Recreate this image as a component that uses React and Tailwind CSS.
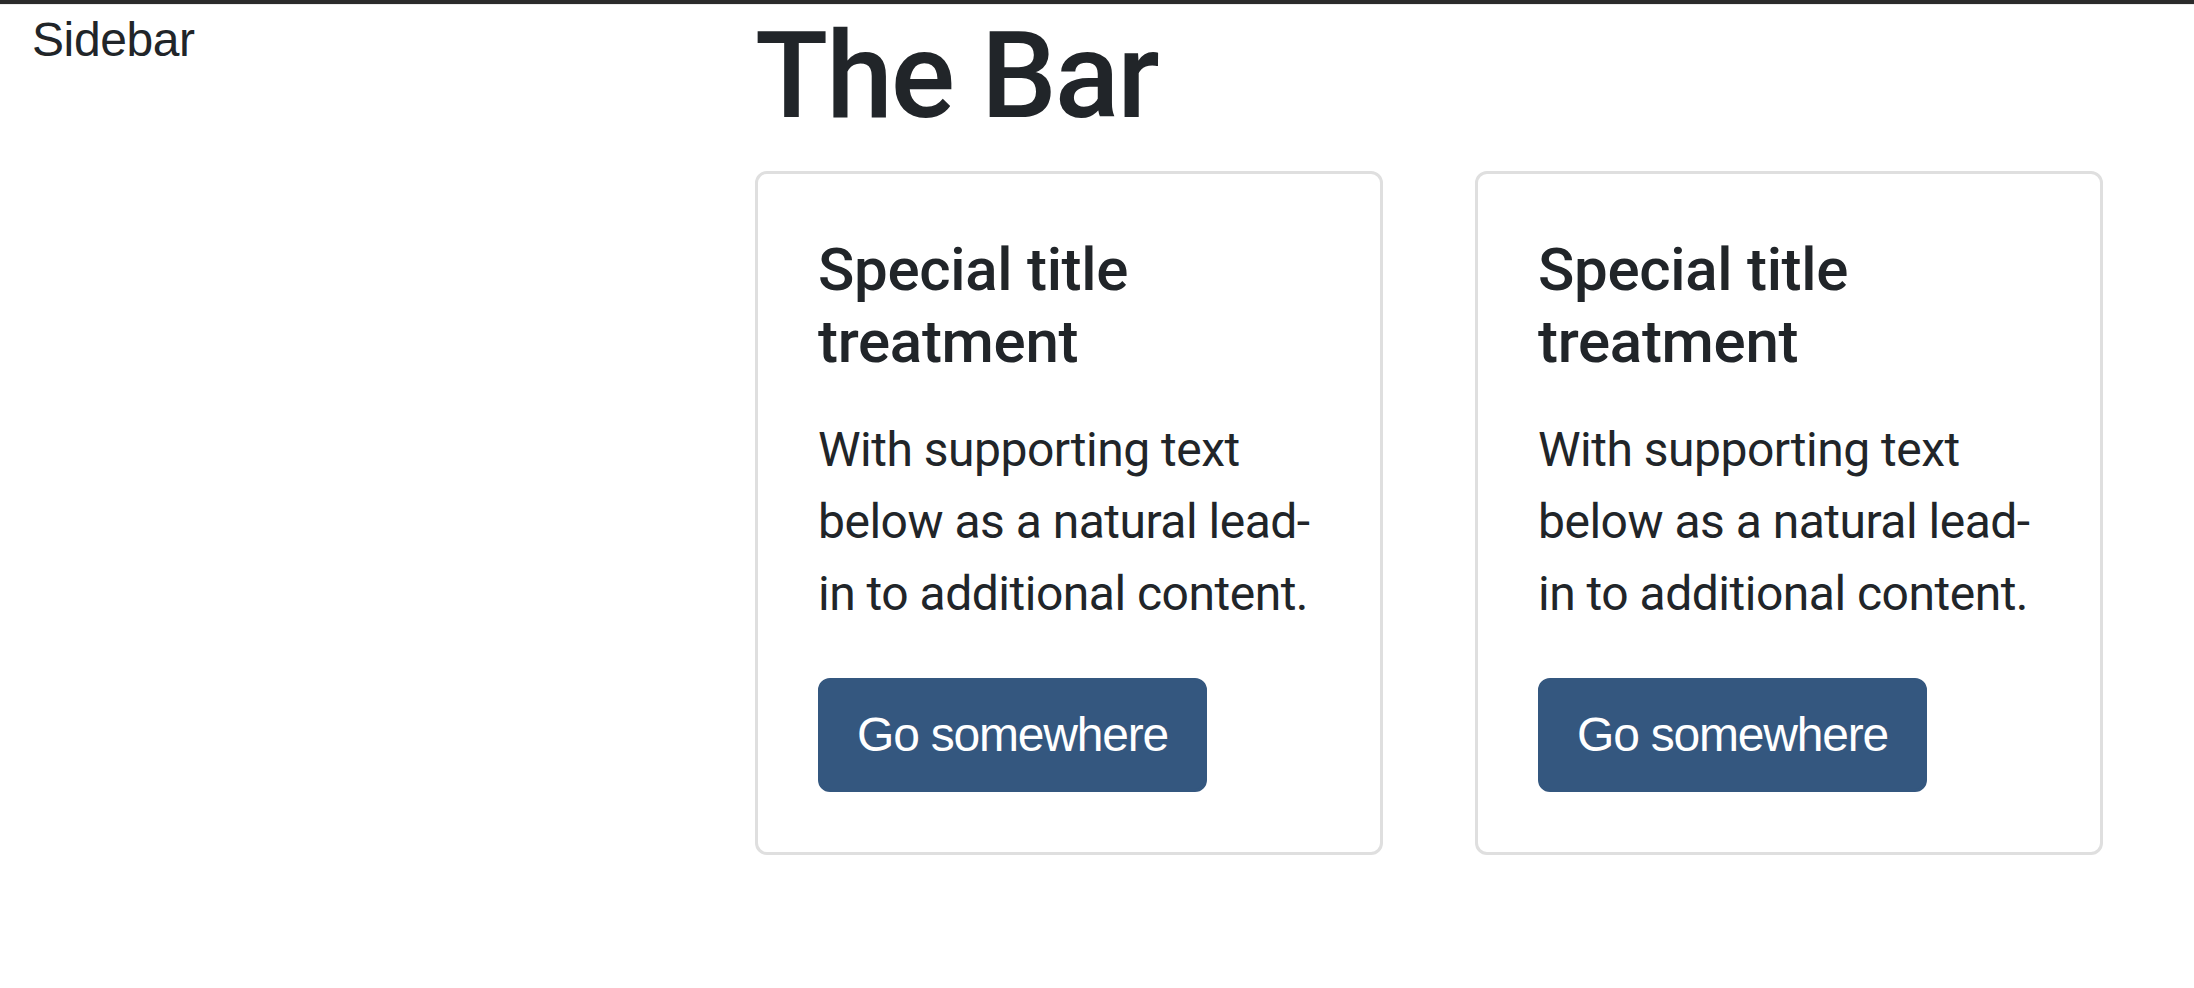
import React from "react";

const cards = [
  { id: 1, title: "Special title treatment" },
  { id: 2, title: "Special title treatment" },
];

const Card = ({ title }) => {
  return (
    <div className="w-[628px] shrink-0 rounded-[12px] border-[3px] border-[#dfdfdf] bg-white p-[60px]">
      <h5 className="mb-[36px] font-['Roboto',sans-serif] text-[60px] font-medium leading-[72px] tracking-[-0.3px] text-[#212529]">
        {title}
      </h5>
      <p className="mb-[48px] whitespace-nowrap font-['Roboto',sans-serif] text-[48px] leading-[72px] tracking-[-0.5px] text-[#212529]">
        With supporting text
        <br />
        below as a natural lead-
        <br />
        in to additional content.
      </p>
      <a
        href="#"
        className="inline-block rounded-[12px] border-[3px] border-[#34577f] bg-[#34577f] px-[36px] py-[18px] font-['Liberation_Sans',Arial,sans-serif] text-[48px] leading-[72px] tracking-[-1.2px] text-white"
      >
        Go somewhere
      </a>
    </div>
  );
};

export default function App() {
  return (
    <div className="min-h-screen bg-white text-[#212529]">
      {/* top frame line */}
      <div className="h-[4px] bg-[#2b2b2b]" />
      <div className="h-[1px] bg-[#ececec]" />

      <div className="flex">
        {/* Sidebar */}
        <div className="w-[755px] shrink-0 pl-[32px]">
          <div className="-mt-[1px] font-['Liberation_Sans',Arial,sans-serif] text-[48px] leading-[72px] tracking-[-0.4px]">
            Sidebar
          </div>
        </div>

        {/* Main */}
        <div className="flex-1">
          <h1 className="-mt-[1px] mb-[23px] font-['Roboto',sans-serif] text-[120px] font-medium leading-[144px] tracking-[-2px]">
            The Bar
          </h1>
          <div className="flex gap-[92px]">
            {cards.map((c) => (
              <Card key={c.id} title={c.title} />
            ))}
          </div>
        </div>
      </div>
    </div>
  );
}
